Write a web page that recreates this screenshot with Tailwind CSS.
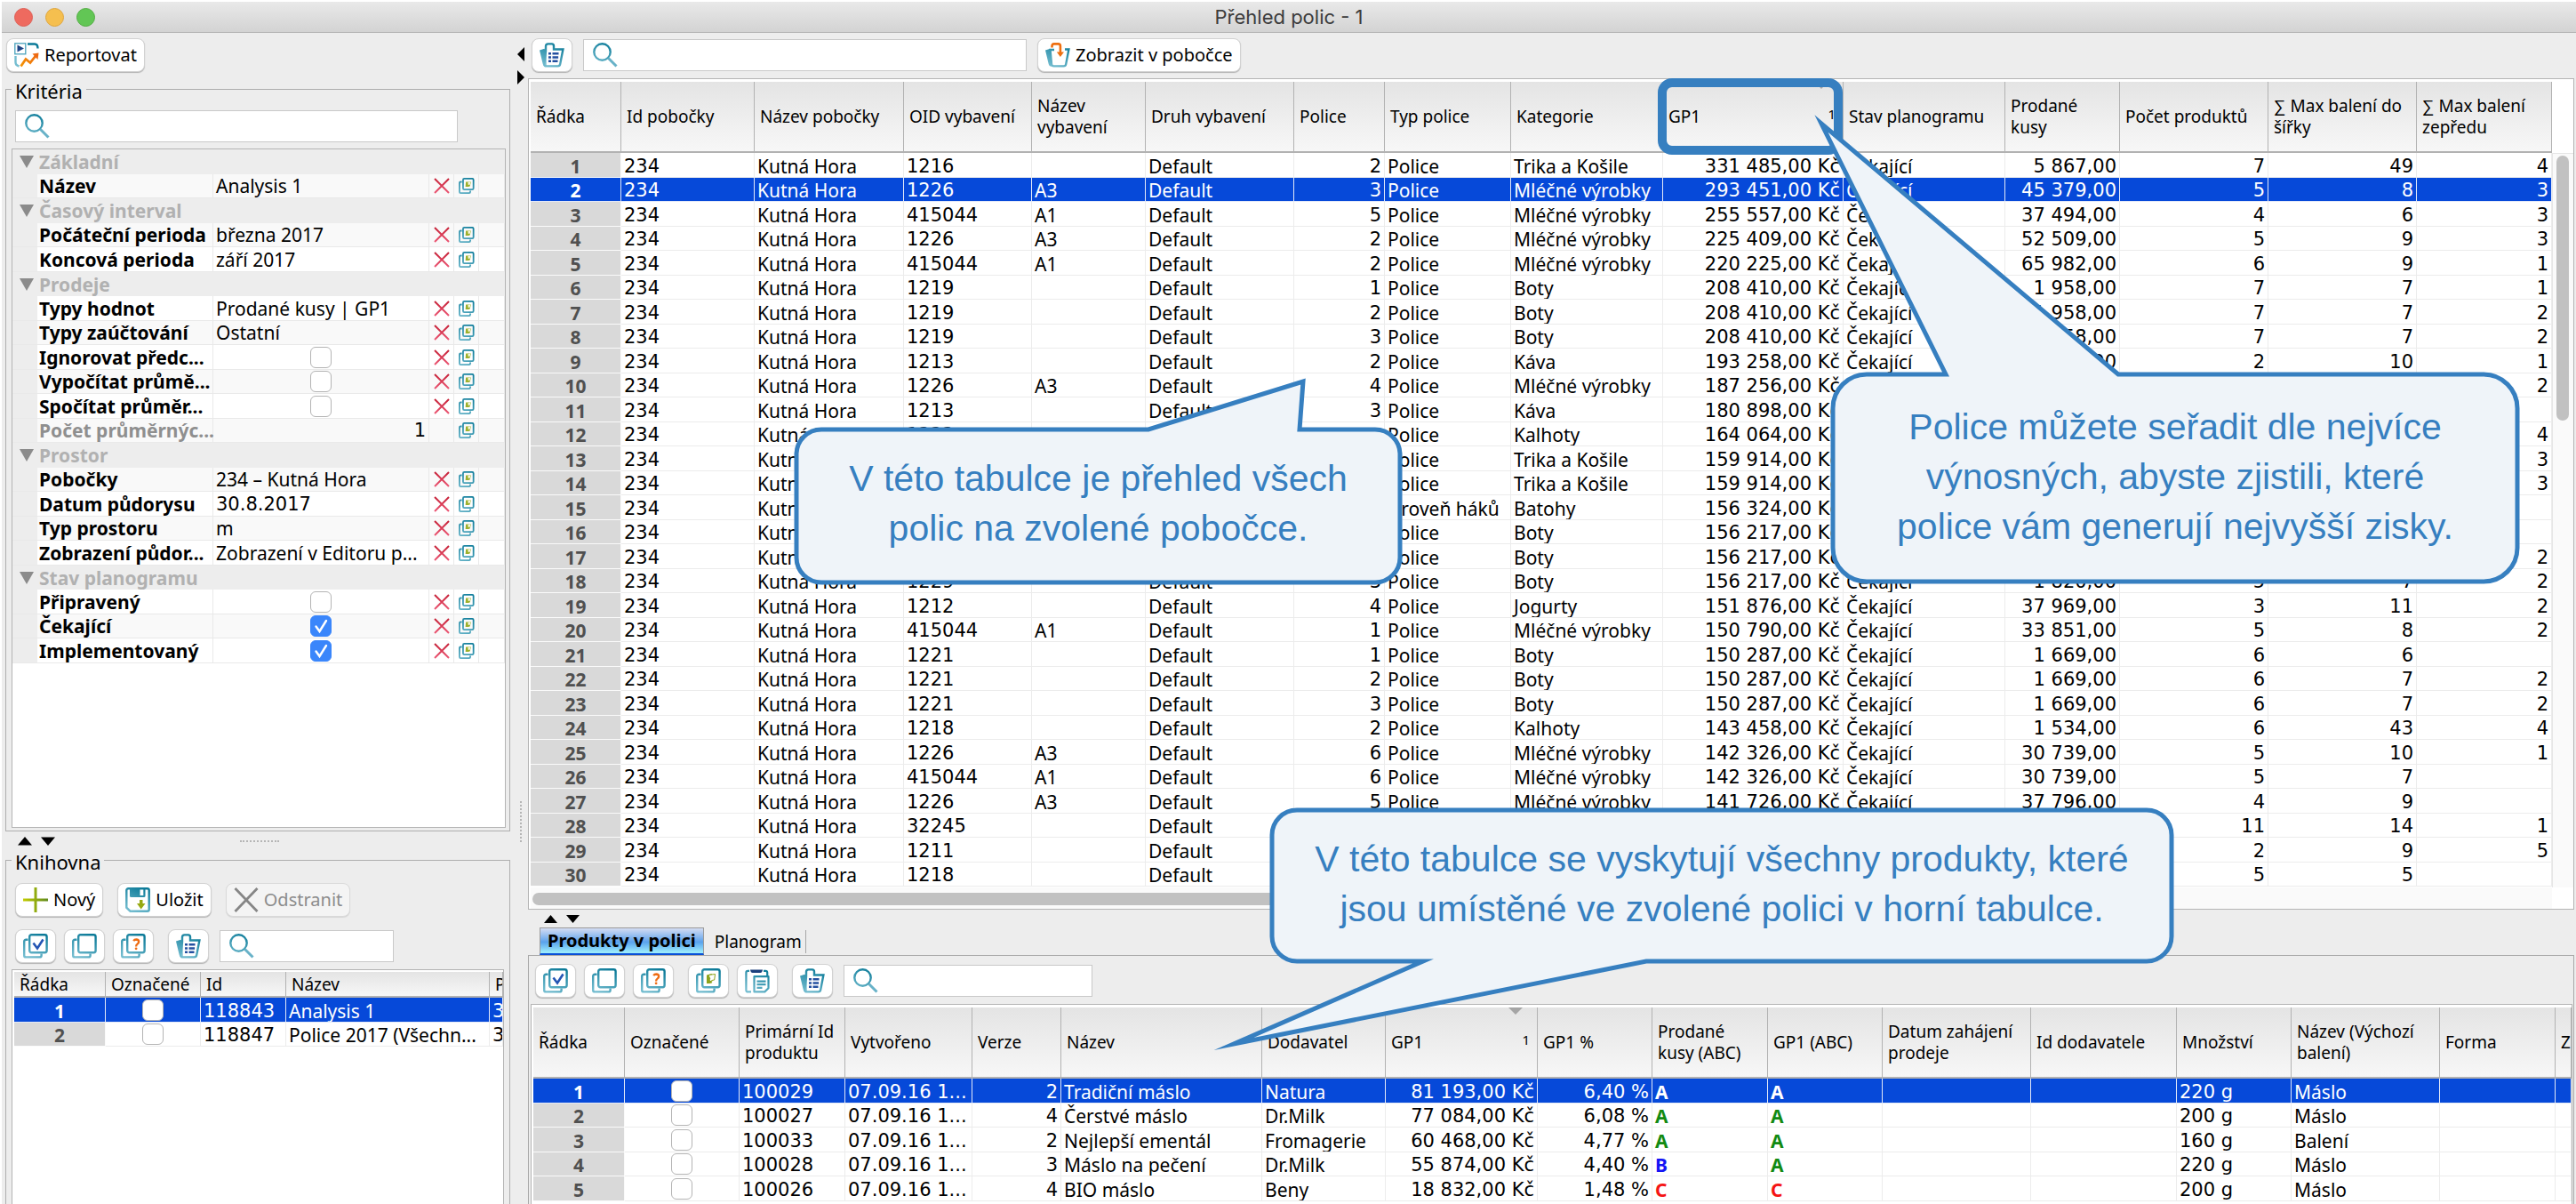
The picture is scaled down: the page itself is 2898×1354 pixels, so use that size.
<!DOCTYPE html>
<html lang="cs">
<head>
<meta charset="utf-8">
<title>Přehled polic - 1</title>
<script src="https://cdn.jsdelivr.net/npm/@tailwindcss/browser@4"></script>
</head>
<body class="bg-white">

<!-- Icon set -->
<svg class="absolute h-0 w-0" aria-hidden="true">
  <defs>
    <linearGradient id="teal" gradientUnits="userSpaceOnUse" x1="20" y1="0" x2="8" y2="28"><stop offset="0" stop-color="#0b7a98"/><stop offset="1" stop-color="#74bdd0"/></linearGradient>
    <linearGradient id="navy" gradientUnits="userSpaceOnUse" x1="0" y1="4" x2="0" y2="24"><stop offset="0" stop-color="#1c3f7c"/><stop offset="1" stop-color="#2c62c4"/></linearGradient>
    <linearGradient id="olive" gradientUnits="userSpaceOnUse" x1="0" y1="0" x2="28" y2="0"><stop offset="0" stop-color="#c3cc00"/><stop offset="1" stop-color="#5f8a1d"/></linearGradient>
    <linearGradient id="orange" gradientUnits="userSpaceOnUse" x1="0" y1="28" x2="20" y2="8"><stop offset="0" stop-color="#f6a000"/><stop offset="1" stop-color="#ee6a12"/></linearGradient>
    <linearGradient id="red" gradientUnits="userSpaceOnUse" x1="0" y1="0" x2="0" y2="18"><stop offset="0" stop-color="#c41f35"/><stop offset="1" stop-color="#ee5a78"/></linearGradient>
  </defs>
  <symbol id="i-stack" viewBox="0 0 28 28">
    <g fill="none" stroke="url(#teal)" stroke-width="2.4"><rect x="7.2" y="1.2" width="19.4" height="20" rx="2.2"/><path d="M5.5 6.8H3.2a2 2 0 0 0-2 2v15.6a2 2 0 0 0 2 2h15.4a2 2 0 0 0 2-2v-2"/></g>
  </symbol>
  <symbol id="i-check" viewBox="0 0 28 28"><use href="#i-stack"/><path d="M11.5 10.5l4.5 6 6.500-10" fill="none" stroke="#2455b4" stroke-width="2.6"/></symbol>
  <symbol id="i-help" viewBox="0 0 28 28"><use href="#i-stack"/><path d="M14.2 8.200q1-1.700 3-1.700 3 .2 3 2.600 0 1.500-1.600 2.500-1.500 1-1.500 2.800" fill="none" stroke="#ee6c13" stroke-width="2.300"/><circle cx="17.100" cy="16.800" r="1.400" fill="#ee6c13"/></symbol>
  <symbol id="i-swap" viewBox="0 0 28 28"><use href="#i-stack"/><path d="M12 7.500l6-1.500-1.500 8 1.500 2.500-3 .5h-3z" fill="#8da31b"/><path d="M14 7.500l7.500-1-.8 6.500-3 .5v2l-3-2.500 1.200-1z" fill="#fff" stroke="#8da31b" stroke-width="1"/></symbol>
  <symbol id="i-copy" viewBox="0 0 20 20">
    <g fill="none" stroke="url(#teal)" stroke-width="2"><rect x="5.500" y="1" width="13" height="13.500" rx="1.500"/><path d="M4 5H2.500A1.500 1.500 0 0 0 1 6.500v11A1.500 1.500 0 0 0 2.500 19H13a1.500 1.500 0 0 0 1.500-1.500V16"/></g>
    <path d="M9 5h6.500l-1.500 5.500-2 .5H8.500z" fill="#9db02c"/><path d="M11.500 5.500l3.500-.5-1 3.500-2 .5z" fill="#f4f7dc"/>
  </symbol>
  <symbol id="i-bag" viewBox="0 0 28 28">
    <path d="M0 8.500l5.500-1.800 2 4L8 26.500q-3.800.5-4.300-2.500z" fill="url(#teal)"/>
    <path d="M7 9.500V4q0-2.600 2.600-2.600h4.200q2.200 0 2.200 2.300V7.500h10.400l-3.200 16.600q-.4 2.300-2.600 2.300H7.600q-2.300 0-2.200-2.300z" fill="#fff" fill-opacity=".35" stroke="url(#teal)" stroke-width="2.400"/>
    <path d="M10 12.200h3M14.500 12.200h7M10 16.500h3M14.500 16.500h6.600M10 20.800h3M14.500 20.800h6" stroke="#2450a0" stroke-width="2.600"/>
  </symbol>
  <symbol id="i-show" viewBox="0 0 28 28">
    <path d="M0 8.500l5.500-1.800L8 26.500q-3.800.5-4.300-2.500z" fill="url(#teal)"/>
    <path d="M10 8H5.500L7 24.200q.3 2.200 2.400 2.200h11.200q2.200 0 2.600-2.300L26.400 7.500H22" fill="none" stroke="url(#teal)" stroke-width="2.400"/>
    <path d="M7.500 5.500V3.800q0-2.400 2.400-2.400h4.600q2.400 0 2.400 2.400V12" fill="none" stroke="#ee6f10" stroke-width="2.600"/><path d="M12.800 10.500h8.200l-4.100 5.500z" fill="#ee6f10"/>
  </symbol>
  <symbol id="i-find" viewBox="0 0 28 28"><circle cx="10.500" cy="10.500" r="9.200" fill="none" stroke="url(#teal)" stroke-width="2.400"/><path d="M17.500 17.500l9 9" stroke="#68b2c8" stroke-width="3"/></symbol>
  <symbol id="i-clip" viewBox="0 0 28 28">
    <path d="M6 1.500h14q-.6 3.500-2.600 3.500H8.600Q6.600 5 6 1.500z" fill="url(#navy)"/>
    <g fill="none" stroke="url(#teal)" stroke-width="2.200"><path d="M5 2.800H3.400a2 2 0 0 0-2 2v19.600a2 2 0 0 0 2 2H7M21 2.800h2.200a2 2 0 0 1 2 2V8"/><path d="M10.500 9.200h16v13l-4.200 4.200H10.500z" stroke-linejoin="round"/><path d="M13.500 14.600h10M13.500 18.200h10M13.500 21.800h6"/></g>
  </symbol>
  <symbol id="i-report" viewBox="0 0 28 28">
    <rect x=".8" y=".8" width="12" height="12" fill="#fff" stroke="#4aa3bd" stroke-width="1.300"/><path d="M3.500 2.500l7.500 4-7.500 4z" fill="url(#navy)"/>
    <path d="M15 1.500h8q3.500 0 3.500 5" fill="none" stroke="#0b7a98" stroke-width="2.400"/><path d="M1.500 15v7q0 3.500 4 4.500" fill="none" stroke="#74bdd0" stroke-width="2.400"/>
    <path d="M7.500 26.500l5.500-8 5 4 7.500-9.500" fill="none" stroke="url(#orange)" stroke-width="2.800"/><path d="M20.500 12.500l7-1-1 7.500z" fill="#ee6a12"/>
  </symbol>
  <symbol id="i-plus" viewBox="0 0 28 28"><path d="M14 0v28M0 14h28" stroke="url(#olive)" stroke-width="3"/></symbol>
  <symbol id="i-disk" viewBox="0 0 28 28">
    <path d="M1.300 3.300a2 2 0 0 1 2-2h21.400a2 2 0 0 1 2 2v21.400a2 2 0 0 1-2 2H5.500l-4.200-4z" fill="none" stroke="url(#teal)" stroke-width="2.400"/>
    <path d="M5 1h17.500v8.500a1.500 1.500 0 0 1-1.500 1.500H6.500A1.500 1.500 0 0 1 5 9.500z" fill="url(#teal)"/><rect x="16.500" y="2.500" width="3.800" height="6.500" fill="#fff"/>
    <path d="M16 14h3.500v4h3l-4.800 6.500-4.700-6.500h3z" fill="#97a912"/>
  </symbol>
  <symbol id="i-cross" viewBox="0 0 28 28"><path d="M1.500 1l25 26M26.500 1l-25 26" stroke="#868686" stroke-width="2.800"/></symbol>
  <symbol id="i-del" viewBox="0 0 18 18"><path d="M1 1l16 16M17 1L1 17" stroke="url(#red)" stroke-width="2"/></symbol>
  <symbol id="i-collapse" viewBox="0 0 16 14"><path d="M0 0h16L8 14z" fill="#8b8b8b"/></symbol>
</svg>

<div class="relative flex h-screen flex-col overflow-hidden pl-0.5 pt-0.5 font-['Noto_Sans',sans-serif] text-[21px] leading-[26px] text-black">

  <!-- Title bar -->
  <header class="flex h-[35px] shrink-0 items-center border-b border-[#b4b4b4] bg-linear-to-b from-[#e9e9e9] to-[#d3d3d3] px-3.5">
    <div class="flex flex-1 gap-3.5">
      <span class="size-[21px] rounded-full border border-[#de5f55] bg-[#ee6a5f]"></span>
      <span class="size-[21px] rounded-full border border-[#dfa53c] bg-[#f5bf4f]"></span>
      <span class="size-[21px] rounded-full border border-[#52ad42] bg-[#62c655]"></span>
    </div>
    <h1 class="font-['Inter',sans-serif] text-[22px] text-[#3c3c3c]">Přehled polic - 1</h1>
    <div class="flex-1"></div>
  </header>

  <main class="flex min-h-0 flex-1 bg-[#ededed] pr-0.5">

    <!-- Criteria and library -->
    <section class="flex w-[576px] shrink-0 flex-col">
      <div class="pl-[5px] pt-1.5">
        <button class="flex h-[38px] items-center gap-1.5 rounded-lg border border-[#d2d2d2] bg-white px-2 text-[20px] shadow-[0_1px_1px_rgba(0,0,0,0.25)]"><svg class="size-7"><use href="#i-report"/></svg>Reportovat</button>
      </div>

      <fieldset class="mx-1 mt-[5px] flex min-h-0 min-w-0 flex-1 flex-col border border-[#aeaeae] pl-1.5 pr-1">
        <legend class="px-1 pt-1 text-[22px] leading-6">Kritéria</legend>
        <div class="ml-1 mt-2.5 flex h-9 w-[498px] shrink-0 items-center border border-[#c9c9c9] bg-white pl-2.5">
          <svg class="size-7 shrink-0"><use href="#i-find"/></svg><input type="search" aria-label="Hledat kritérium" class="w-full bg-transparent px-2 outline-none">
        </div>
        <div class="mb-[3px] mt-[7px] min-h-0 flex-1 overflow-hidden border border-[#b4b4b4] bg-white">
          <table class="w-full table-fixed border-separate border-spacing-0">
            <colgroup><col class="w-7"><col class="w-[198px]"><col class="w-[243px]"><col class="w-7"><col class="w-7"><col></colgroup>
            <tbody id="criteria"></tbody>
          </table>
        </div>
      </fieldset>

      <div class="flex h-[18px] shrink-0 items-center pl-[18px] pt-1">
        <svg class="h-2.5 w-11" viewBox="0 0 44 10"><path d="M0 9.500L8 0l8 9.500zM26 .5h16L34 10z"/></svg>
        <div class="ml-[206px] w-11 border-t-2 border-dotted border-[#b5b5b5]"></div>
      </div>

      <fieldset class="mx-1 flex h-[401px] min-w-0 shrink-0 flex-col border border-b-0 border-[#aeaeae] pl-1.5 pr-1.5">
        <legend class="px-1 pt-1 text-[22px] leading-6">Knihovna</legend>
        <div class="ml-1 mt-3 flex text-[20px]">
          <button class="flex h-[38px] items-center gap-1.5 rounded-lg border border-[#d2d2d2] bg-white px-2 shadow-[0_1px_1px_rgba(0,0,0,0.25)]"><svg class="size-7"><use href="#i-plus"/></svg>Nový</button>
          <button class="ml-4 flex h-[38px] items-center gap-1.5 rounded-lg border border-[#d2d2d2] bg-white px-2 shadow-[0_1px_1px_rgba(0,0,0,0.25)]"><svg class="size-7"><use href="#i-disk"/></svg>Uložit</button>
          <button disabled class="ml-4 flex h-[38px] items-center gap-1.5 rounded-lg border border-[#dadada] bg-[#f4f4f4] px-2 text-[#8c8c8c] shadow-[0_1px_1px_rgba(0,0,0,0.1)]"><svg class="size-7"><use href="#i-cross"/></svg>Odstranit</button>
        </div>
        <div class="ml-1 mt-3.5 flex items-center">
          <button aria-label="Označit vše" class="flex h-[38px] w-[46px] items-center justify-center rounded-lg border border-[#d2d2d2] bg-white shadow-[0_1px_1px_rgba(0,0,0,0.25)]"><svg class="size-7"><use href="#i-check"/></svg></button>
          <button aria-label="Zrušit označení" class="ml-[9px] flex h-[38px] w-[46px] items-center justify-center rounded-lg border border-[#d2d2d2] bg-white shadow-[0_1px_1px_rgba(0,0,0,0.25)]"><svg class="size-7"><use href="#i-stack"/></svg></button>
          <button aria-label="Označit podle podmínky" class="ml-[9px] flex h-[38px] w-[46px] items-center justify-center rounded-lg border border-[#d2d2d2] bg-white shadow-[0_1px_1px_rgba(0,0,0,0.25)]"><svg class="size-7"><use href="#i-help"/></svg></button>
          <button aria-label="Sloupce" class="ml-4 flex h-[38px] w-[46px] items-center justify-center rounded-lg border border-[#d2d2d2] bg-white shadow-[0_1px_1px_rgba(0,0,0,0.25)]"><svg class="size-7"><use href="#i-bag"/></svg></button>
          <div class="ml-3 flex h-9 w-[196px] items-center border border-[#c9c9c9] bg-white pl-2.5">
            <svg class="size-7 shrink-0"><use href="#i-find"/></svg><input type="search" aria-label="Hledat v knihovně" class="w-full min-w-0 bg-transparent px-2 outline-none">
          </div>
        </div>
        <div class="mt-[7px] h-[264px] shrink-0 overflow-hidden border border-b-0 border-[#b4b4b4] bg-white pl-0.5 pt-0.5">
          <table class="w-full table-fixed border-separate border-spacing-0">
            <colgroup><col class="w-[103px]"><col class="w-[107px]"><col class="w-[96px]"><col class="w-[229px]"><col></colgroup>
            <thead id="library-head"></thead>
            <tbody id="library"></tbody>
          </table>
        </div>
      </fieldset>
    </section>

    <!-- Vertical divider -->
    <div class="flex w-4 shrink-0 flex-col items-center pt-4">
      <svg class="h-[42px] w-2" viewBox="0 0 8 42"><path d="M8 0v16L0 8zM0 26v16l8-8z"/></svg>
      <div class="mt-[806px] h-[46px] border-l-2 border-dotted border-[#b5b5b5]"></div>
    </div>

    <section class="flex min-w-0 flex-1 flex-col">
      <div class="flex items-center pb-[7px] pl-1 pt-1.5">
        <button aria-label="Sloupce" class="flex h-[38px] w-[46px] items-center justify-center rounded-lg border border-[#d2d2d2] bg-white shadow-[0_1px_1px_rgba(0,0,0,0.25)]"><svg class="size-7"><use href="#i-bag"/></svg></button>
        <div class="ml-3 flex h-9 w-[499px] items-center border border-[#c9c9c9] bg-white pl-2.5">
          <svg class="size-7 shrink-0"><use href="#i-find"/></svg><input type="search" aria-label="Hledat polici" class="w-full bg-transparent px-2 outline-none">
        </div>
        <button class="ml-3 flex h-[38px] items-center gap-1.5 rounded-lg border border-[#d2d2d2] bg-white px-2 text-[20px] shadow-[0_1px_1px_rgba(0,0,0,0.25)]"><svg class="size-7"><use href="#i-show"/></svg>Zobrazit v pobočce</button>
      </div>

      <!-- Shelf table -->
      <div class="flex min-h-0 flex-1 flex-col border border-[#b4b4b4] bg-white pl-0.5 pt-[3px]">
        <div class="flex min-h-0 flex-1 overflow-hidden">
          <div class="min-w-0 flex-1">
            <table class="w-full table-fixed border-separate border-spacing-0">
              <colgroup><col class="w-[102px]"><col class="w-[150px]"><col class="w-[168px]"><col class="w-[144px]"><col class="w-[128px]"><col class="w-[167px]"><col class="w-[102px]"><col class="w-[142px]"><col class="w-[171px]"><col class="w-[203px]"><col class="w-[182px]"><col class="w-[129px]"><col class="w-[167px]"><col class="w-[167px]"><col></colgroup>
              <thead id="shelves-head"></thead>
              <tbody id="shelves"></tbody>
            </table>
          </div>
          <div class="flex w-6 shrink-0 flex-col pt-20">
            <div class="flex-1 border-l border-t border-[#e6e6e6] bg-[#fafafa] pl-1 pt-0.5"><div class="h-[298px] w-3.5 rounded-full bg-[#c1c1c1]"></div></div>
          </div>
        </div>
        <div class="mr-6 h-6 shrink-0 bg-[#fafafa] pl-0.5 pt-1.5"><div class="h-3.5 w-[70%] rounded-full bg-[#c1c1c1]"></div></div>
      </div>

      <div class="flex h-5 shrink-0 items-center pl-[18px]">
        <svg class="h-[9px] w-10" viewBox="0 0 40 9"><path d="M0 9L7.500 0 15 9zM25 0h15l-7.500 9z"/></svg>
      </div>

      <!-- Products -->
      <div class="flex h-[311px] shrink-0 flex-col">
        <nav class="flex h-[31px] shrink-0 items-center pl-[13px]">
          <button class="flex h-full items-center border border-b-2 border-[#9a9a9a] border-b-[#0a50d8] bg-linear-to-b from-[#d3dcf2] from-0% via-[#5aa2ec] via-55% to-[#9aeafc] to-95% px-2 text-[20px] font-bold">Produkty v polici</button>
          <button class="h-[26px] border-r border-[#a5a5a5] pl-3 pr-1 text-[19px]">Planogram</button>
        </nav>
        <div class="flex min-h-0 flex-1 flex-col border border-b-0 border-[#a9a9a9] pl-0.5 pr-px pt-[9px]">
          <div class="flex shrink-0 items-center pl-[5px]">
            <button aria-label="Označit vše" class="flex h-[38px] w-[46px] items-center justify-center rounded-lg border border-[#d2d2d2] bg-white shadow-[0_1px_1px_rgba(0,0,0,0.25)]"><svg class="size-7"><use href="#i-check"/></svg></button>
            <button aria-label="Zrušit označení" class="ml-[9px] flex h-[38px] w-[46px] items-center justify-center rounded-lg border border-[#d2d2d2] bg-white shadow-[0_1px_1px_rgba(0,0,0,0.25)]"><svg class="size-7"><use href="#i-stack"/></svg></button>
            <button aria-label="Označit podle podmínky" class="ml-[9px] flex h-[38px] w-[46px] items-center justify-center rounded-lg border border-[#d2d2d2] bg-white shadow-[0_1px_1px_rgba(0,0,0,0.25)]"><svg class="size-7"><use href="#i-help"/></svg></button>
            <button aria-label="Kopírovat výběr" class="ml-4 flex h-[38px] w-[46px] items-center justify-center rounded-lg border border-[#d2d2d2] bg-white shadow-[0_1px_1px_rgba(0,0,0,0.25)]"><svg class="size-7"><use href="#i-swap"/></svg></button>
            <button aria-label="Vložit ze schránky" class="ml-[9px] flex h-[38px] w-[46px] items-center justify-center rounded-lg border border-[#d2d2d2] bg-white shadow-[0_1px_1px_rgba(0,0,0,0.25)]"><svg class="size-7"><use href="#i-clip"/></svg></button>
            <button aria-label="Sloupce" class="ml-4 flex h-[38px] w-[46px] items-center justify-center rounded-lg border border-[#d2d2d2] bg-white shadow-[0_1px_1px_rgba(0,0,0,0.25)]"><svg class="size-7"><use href="#i-bag"/></svg></button>
            <div class="ml-3 flex h-9 w-[280px] items-center border border-[#c9c9c9] bg-white pl-2.5">
              <svg class="size-7 shrink-0"><use href="#i-find"/></svg><input type="search" aria-label="Hledat produkt" class="w-full bg-transparent px-2 outline-none">
            </div>
          </div>
          <div class="mt-[7px] min-h-0 flex-1 overflow-hidden border border-b-0 border-[#b4b4b4] bg-white pl-0.5 pt-[3px]">
            <table class="w-full table-fixed border-separate border-spacing-0">
              <colgroup><col class="w-[103px]"><col class="w-[129px]"><col class="w-[119px]"><col class="w-[143px]"><col class="w-[100px]"><col class="w-[226px]"><col class="w-[139px]"><col class="w-[171px]"><col class="w-[129px]"><col class="w-[130px]"><col class="w-[129px]"><col class="w-[167px]"><col class="w-[164px]"><col class="w-[129px]"><col class="w-[167px]"><col class="w-[130px]"><col></colgroup>
              <thead id="products-head"></thead>
              <tbody id="products"></tbody>
            </table>
          </div>
        </div>
      </div>
    </section>
  </main>

  <!-- Callouts pinned over the window -->
  <div class="absolute left-[1865px] top-[88px] h-[86px] w-[208px] rounded-[16px] border-[10px] border-[#367fc0]"></div>
  <svg class="pointer-events-none absolute left-0 top-0 h-[1354px] w-[2898px]" viewBox="0 0 2898 1354" fill="#eff4f9" stroke="#367fc0" stroke-width="5" stroke-miterlimit="14">
    <path d="M924 483H1292L1466 429 1462 483H1547a28 28 0 0 1 28 28V627a28 28 0 0 1-28 28H924a28 28 0 0 1-28-28V511a28 28 0 0 1 28-28z"/>
    <path d="M2100 421H2189L2049 139 2383 421H2794a38 38 0 0 1 38 38V616a38 38 0 0 1-38 38H2100a38 38 0 0 1-38-38V459a38 38 0 0 1 38-38z"/>
    <path d="M1459 911H2415a28 28 0 0 1 28 28V1053a28 28 0 0 1-28 28H1852L1388 1174 1601 1081H1459a28 28 0 0 1-28-28V939a28 28 0 0 1 28-28z"/>
  </svg>
  <p class="absolute left-[896px] top-[483px] flex h-[172px] w-[679px] items-center justify-center pb-1.5 text-center font-['Liberation_Sans',sans-serif] text-[41px] leading-[56px] text-[#367fc0]">V této tabulce je přehled všech<br>polic na zvolené pobočce.</p>
  <p class="absolute left-[2062px] top-[421px] flex h-[233px] w-[770px] items-center justify-center pb-1 text-center font-['Liberation_Sans',sans-serif] text-[41px] leading-[56px] text-[#367fc0]">Police můžete seřadit dle nejvíce<br>výnosných, abyste zjistili, které<br>police vám generují nejvyšší zisky.</p>
  <p class="absolute left-[1431px] top-[911px] flex h-[170px] w-[1012px] items-center justify-center pb-1 text-center font-['Liberation_Sans',sans-serif] text-[41px] leading-[56px] text-[#367fc0]">V této tabulce se vyskytují všechny produkty, které<br>jsou umístěné ve zvolené polici v horní tabulce.</p>
</div>

<script>
const box = (on, label) => `<span class="relative mx-auto block size-6"><input type="checkbox" aria-label="${label}" ${on ? 'checked' : ''} class="block size-6 appearance-none rounded-[6px] border border-[#b4b4b4] bg-white checked:border-[#3a86fb] checked:bg-[#3a86fb]">${on ? '<svg class="pointer-events-none absolute left-0 top-0 size-6" viewBox="0 0 24 24"><path d="M6.500 12.500l4 5.500 7.500-12" fill="none" stroke="#fff" stroke-width="2.400" stroke-linecap="round"/></svg>' : ''}</span>`;

/* Criteria tree: a string opens a group, an array is [name, value, disabled] */
const criteria = [
  'Základní', ['Název', 'Analysis 1'],
  'Časový interval', ['Počáteční perioda', 'března 2017'], ['Koncová perioda', 'září 2017'],
  'Prodeje', ['Typy hodnot', 'Prodané kusy | GP1'], ['Typy zaúčtování', 'Ostatní'], ['Ignorovat předc...', false], ['Vypočítat průmě...', false], ['Spočítat průměr...', false], ['Počet průměrnýc...', '1', true],
  'Prostor', ['Pobočky', '234 – Kutná Hora'], ['Datum půdorysu', '30.8.2017'], ['Typ prostoru', 'm'], ['Zobrazení půdor...', 'Zobrazení v Editoru p...'],
  'Stav planogramu', ['Připravený', false], ['Čekající', true], ['Implementovaný', true]
];
document.getElementById('criteria').innerHTML = criteria.map(c => {
  if (typeof c === 'string') return `<tr class="odd:h-7 even:h-[27px]"><th colspan="6" scope="rowgroup" class="bg-[#ededed] p-0 pl-2 text-left font-bold text-[#b1b1b1]"><span class="flex items-center gap-1.5"><svg class="h-3.5 w-4"><use href="#i-collapse"/></svg>${c}</span></th></tr>`;
  const [name, value, off] = c;
  const val = typeof value === 'boolean' ? box(value, name) : value;
  const digits = /^[\d.]+$/.test(value) ? "font-['DejaVu_Sans',sans-serif]" : '';
  return `<tr class="odd:h-7 even:h-[27px] odd:bg-white even:bg-[#f9f9f9]">
    <td class="border-b border-[#e9e9e9] bg-[#ededed] p-0"></td>
    <th scope="row" class="whitespace-nowrap border-b border-r border-[#e9e9e9] p-0 pl-0.5 text-left font-bold ${off ? 'text-[#8f8f8f]' : ''}">${name}</th>
    <td class="overflow-hidden whitespace-nowrap border-b border-r border-[#e9e9e9] p-0 px-[3px] ${digits} ${off ? 'text-right' : ''}">${val}</td>
    <td class="border-b border-r border-[#e9e9e9] p-0">${off ? '' : '<svg class="mx-auto size-[18px]"><use href="#i-del"/></svg>'}</td>
    <td class="border-b border-r border-[#e9e9e9] p-0"><svg class="mx-auto size-[18px]"><use href="#i-copy"/></svg></td>
    <td class="border-b border-r border-[#e9e9e9] p-0"></td></tr>`;
}).join('');

/* Column kinds: n row number, t text, d digits, r digits aligned right, c tick box, b ABC class */
const kinds = {
  n: 'p-0 pt-0.5 text-center font-bold',
  t: 'p-0 pl-[3px] pt-0.5',
  d: "p-0 pl-[3px] pt-0.5 font-['DejaVu_Sans',sans-serif]",
  r: "p-0 pr-[3px] pt-0.5 text-right font-['DejaVu_Sans',sans-serif]",
  c: 'p-0',
  b: 'p-0 pl-[3px] pt-0.5 font-bold'
};
const abc = { A: 'text-[#128a12]', B: 'text-[#1414f5]', C: 'text-[#f51414]' };
const body = (id, spec, rows, selected) => {
  document.getElementById(id).innerHTML = rows.map((row, i) => {
    const on = i === selected;
    return `<tr class="odd:h-7 even:h-[27px] ${on ? 'bg-[#0649d9] text-white' : ''}">` + [...spec].map((k, j) => {
      const v = row[j] ?? '';
      const tone = on ? 'border-[#e3e9f8]' : k === 'n' ? 'border-[#fafafa] bg-[#d9d9d9] text-[#505050]' : k === 'b' ? 'border-[#ececec] ' + abc[v] : 'border-[#ececec]';
      return `<td class="overflow-hidden whitespace-nowrap border-b border-r leading-6 ${kinds[k]} ${tone}">${k === 'c' ? box(false, 'Označené') : v}</td>`;
    }).join('') + '</tr>';
  }).join('');
};
const head = (id, names, tall, sorted) => {
  document.getElementById(id).innerHTML = '<tr>' + names.map((n, j) => `<th scope="col" class="relative overflow-hidden border-b-2 border-r border-[#b2b2b2] bg-linear-to-b from-[#e4e4e4] to-[#f7f7f7] p-0 pl-1.5 text-left text-[19px] font-normal leading-6 ${tall ? 'h-20' : 'h-[29px] whitespace-nowrap'}">${n}${j === sorted ? '<svg class="absolute right-4 top-0 h-2 w-4" viewBox="0 0 16 8"><path d="M0 0h16L8 8z" fill="#a5a5a5"/></svg><span class="absolute right-2 top-6 text-[15px]">1</span>' : ''}</th>`).join('') + '</tr>';
};

head('library-head', ['Řádka', 'Označené', 'Id', 'Název', 'P'], false);
body('library', 'ncdtd', [[1, '', '118843', 'Analysis 1', '3'], [2, '', '118847', 'Police 2017 (Všechn...', '3']], 0);

head('shelves-head', ['Řádka', 'Id pobočky', 'Název pobočky', 'OID vybavení', 'Název<br>vybavení', 'Druh vybavení', 'Police', 'Typ police', 'Kategorie', 'GP1', 'Stav planogramu', 'Prodané<br>kusy', 'Počet produktů', '∑ Max balení do<br>šířky', '∑ Max balení<br>zepředu'], true, 9);
/* [OID, equipment, kind, shelf, type, category, GP1, state, sold, products, wide, front] */
const D = 'Default', P = 'Police', M = 'Mléčné výrobky', W = 'Čekající';
const shelves = [
  ['1216', '', D, 2, P, 'Trika a Košile', '331 485', W, '5 867', 7, 49, 4],
  ['1226', 'A3', D, 3, P, M, '293 451', W, '45 379', 5, 8, 3],
  ['415044', 'A1', D, 5, P, M, '255 557', W, '37 494', 4, 6, 3],
  ['1226', 'A3', D, 2, P, M, '225 409', W, '52 509', 5, 9, 3],
  ['415044', 'A1', D, 2, P, M, '220 225', W, '65 982', 6, 9, 1],
  ['1219', '', D, 1, P, 'Boty', '208 410', W, '1 958', 7, 7, 1],
  ['1219', '', D, 2, P, 'Boty', '208 410', W, '1 958', 7, 7, 2],
  ['1219', '', D, 3, P, 'Boty', '208 410', W, '1 958', 7, 7, 2],
  ['1213', '', D, 2, P, 'Káva', '193 258', W, '3 120', 2, 10, 1],
  ['1226', 'A3', D, 4, P, M, '187 256', '', '', '', '', 2],
  ['1213', '', D, 3, P, 'Káva', '180 898', '', '', '', '', ''],
  ['1222', '', D, '', P, 'Kalhoty', '164 064', '', '', '', '', 4],
  ['', '', '', '', P, 'Trika a Košile', '159 914', '', '', '', '', 3],
  ['', '', '', '', P, 'Trika a Košile', '159 914', '', '', '', '', 3],
  ['', '', '', '', 'Úroveň háků', 'Batohy', '156 324', '', '', '', '', ''],
  ['', '', '', '', P, 'Boty', '156 217', '', '', '', '', ''],
  ['', '', '', '', P, 'Boty', '156 217', '', '', '', '', 2],
  ['1229', '', D, 3, P, 'Boty', '156 217', W, '1 820', 5, 7, 2],
  ['1212', '', D, 4, P, 'Jogurty', '151 876', W, '37 969', 3, 11, 2],
  ['415044', 'A1', D, 1, P, M, '150 790', W, '33 851', 5, 8, 2],
  ['1221', '', D, 1, P, 'Boty', '150 287', W, '1 669', 6, 6, ''],
  ['1221', '', D, 2, P, 'Boty', '150 287', W, '1 669', 6, 7, 2],
  ['1221', '', D, 3, P, 'Boty', '150 287', W, '1 669', 6, 7, 2],
  ['1218', '', D, 2, P, 'Kalhoty', '143 458', W, '1 534', 6, 43, 4],
  ['1226', 'A3', D, 6, P, M, '142 326', W, '30 739', 5, 10, 1],
  ['415044', 'A1', D, 6, P, M, '142 326', W, '30 739', 5, 7, ''],
  ['1226', 'A3', D, 5, P, M, '141 726', W, '37 796', 4, 9, ''],
  ['32245', '', D, '', '', '', '', '', '', 11, 14, 1],
  ['1211', '', D, '', '', '', '', '', '', 2, 9, 5],
  ['1218', '', D, '', '', '', '', '', '', 5, 5, '']
].map(([oid, eq, kind, no, type, cat, gp, state, sold, prod, wide, front], i) => [i + 1, '234', 'Kutná Hora', oid, eq, kind, no, type, cat, gp && gp + ',00 Kč', state, sold && sold + ',00', prod, wide, front]);
body('shelves', 'ndtdttrttrtrrrr', shelves, 1);

head('products-head', ['Řádka', 'Označené', 'Primární Id<br>produktu', 'Vytvořeno', 'Verze', 'Název', 'Dodavatel', 'GP1', 'GP1 %', 'Prodané<br>kusy (ABC)', 'GP1 (ABC)', 'Datum zahájení<br>prodeje', 'Id dodavatele', 'Množství', 'Název (Výchozí<br>balení)', 'Forma', 'Z'], true, 7);
body('products', 'ncddrttrrbbttdttt', [
  [1, '', '100029', '07.09.16 1...', 2, 'Tradiční máslo', 'Natura', '81 193,00 Kč', '6,40 %', 'A', 'A', '', '', '220 g', 'Máslo'],
  [2, '', '100027', '07.09.16 1...', 4, 'Čerstvé máslo', 'Dr.Milk', '77 084,00 Kč', '6,08 %', 'A', 'A', '', '', '200 g', 'Máslo'],
  [3, '', '100033', '07.09.16 1...', 2, 'Nejlepší ementál', 'Fromagerie', '60 468,00 Kč', '4,77 %', 'A', 'A', '', '', '160 g', 'Balení'],
  [4, '', '100028', '07.09.16 1...', 3, 'Máslo na pečení', 'Dr.Milk', '55 874,00 Kč', '4,40 %', 'B', 'A', '', '', '220 g', 'Máslo'],
  [5, '', '100026', '07.09.16 1...', 4, 'BIO máslo', 'Beny', '18 832,00 Kč', '1,48 %', 'C', 'C', '', '', '200 g', 'Máslo']
], 0);
</script>
</body>
</html>
